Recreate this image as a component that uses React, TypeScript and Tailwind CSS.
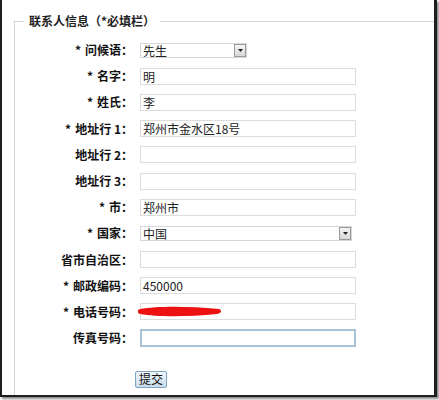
import React from 'react';

type Row = {
  label: string;
  required?: boolean;
  kind: 'text' | 'select';
  value?: string;
  width: string;
  focused?: boolean;
  redacted?: boolean;
};

const rows: Row[] = [
  { label: '问候语', required: true, kind: 'select', value: '先生', width: 'w-[107px]' },
  { label: '名字', required: true, kind: 'text', value: '明', width: 'w-[216px]' },
  { label: '姓氏', required: true, kind: 'text', value: '李', width: 'w-[216px]' },
  { label: '地址行 1', required: true, kind: 'text', value: '郑州市金水区18号', width: 'w-[216px]' },
  { label: '地址行 2', kind: 'text', width: 'w-[216px]' },
  { label: '地址行 3', kind: 'text', width: 'w-[216px]' },
  { label: '市', required: true, kind: 'text', value: '郑州市', width: 'w-[216px]' },
  { label: '国家', required: true, kind: 'select', value: '中国', width: 'w-[212px]' },
  { label: '省市自治区', kind: 'text', width: 'w-[216px]' },
  { label: '邮政编码', required: true, kind: 'text', value: '450000', width: 'w-[216px]' },
  { label: '电话号码', required: true, kind: 'text', width: 'w-[216px]', redacted: true },
  { label: '传真号码', kind: 'text', width: 'w-[216px]', focused: true },
];

const FauxSelect: React.FC<{ value: string; width: string }> = ({ value, width }) => (
  <div className={`relative h-[15px] ${width} border border-[#d6d6d6] bg-white`}>
    <span className="absolute left-[2px] top-[-1px] text-[12px] leading-[15px] text-[#222]">{value}</span>
    <span className="absolute right-[0px] top-[0px] flex h-[13px] w-[12px] items-center justify-center border border-[#9a9a9a] bg-gradient-to-b from-[#f4f4f4] to-[#d8d8d8]">
      <svg width="5" height="3" viewBox="0 0 5 3">
        <path d="M0 0h5L2.5 3z" fill="#222" />
      </svg>
    </span>
  </div>
);

const TextBox: React.FC<{ row: Row }> = ({ row }) => (
  <div
    className={`relative ${row.width} bg-white ${
      row.focused ? 'h-[18px] border-2 border-[#a9c3d6]' : 'h-[17px] border border-[#dcdcdc]'
    }`}
  >
    {row.value && (
      <span className="absolute left-[2px] top-0 text-[12px] leading-[15px] text-[#222]">{row.value}</span>
    )}
    {row.redacted && (
      <svg className="absolute left-[-4px] top-[0px]" width="86" height="14" viewBox="0 0 86 14">
        <path
          d="M3 5 C 20 2, 50 2, 82 5 C 85 6, 85 9, 80 10 C 50 13, 20 13, 3 10 C 0 9, 0 6, 3 5 Z"
          fill="#ee1111"
        />
      </svg>
    )}
  </div>
);

export default function App() {
  return (
    <div
      className="relative h-[400px] w-[439px] overflow-hidden bg-white"
      style={{ fontFamily: '"Noto Sans CJK SC", "Liberation Sans", sans-serif' }}
    >
      <div className="h-[397px] w-[437px] overflow-hidden border-b-[2px] border-l-[2px] border-r-[3px] border-[#1e1e1e] bg-white shadow-[2px_2px_2px_rgba(0,0,0,0.45)]">
        <fieldset className="ml-[12px] mt-[13px] h-[420px] w-[440px] border border-[#d4d4d4]">
          <legend className="ml-[9px] px-[5px] text-[12px] font-bold leading-[16px] text-[#222]">
            联系人信息（*必填栏）
          </legend>

          <div className="mt-[8px] grid grid-cols-[118px_1fr] gap-x-[7px]">
            {rows.map((row) => (
              <React.Fragment key={row.label}>
                <div className="flex h-[26.2px] items-center justify-end text-[12px] font-bold text-[#111]">
                  {row.required && <span className="mr-[4px]">*</span>}
                  {row.label}：
                </div>
                <div className="flex h-[26.2px] items-center">
                  {row.kind === 'select' ? (
                    <FauxSelect value={row.value ?? ''} width={row.width} />
                  ) : (
                    <TextBox row={row} />
                  )}
                </div>
              </React.Fragment>
            ))}
          </div>

          <div className="mt-[14px] pl-[120px]">
            <button className="h-[17px] w-[32px] rounded-[2px] border border-[#7fa3bf] bg-gradient-to-b from-[#f2f8fc] to-[#c8dcec] text-[12px] leading-[14px] text-[#111]">
              提交
            </button>
          </div>
        </fieldset>
      </div>
    </div>
  );
}
